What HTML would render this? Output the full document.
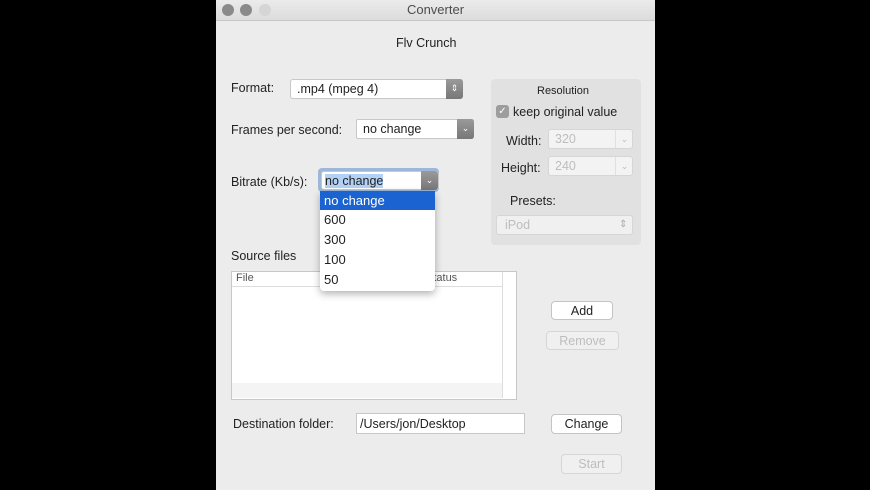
<!DOCTYPE html><html><head><style>
body{margin:0;width:870px;height:490px;background:#000;position:relative;overflow:hidden;font-family:"Liberation Sans",sans-serif;font-size:12.5px;color:#222}
.a{position:absolute}
#win{left:216px;top:0;width:439px;height:490px;background:#ececec}
#tb{left:0;top:0;width:439px;height:20px;background:linear-gradient(#ebebeb,#dcdcdc);border-bottom:1px solid #c8c8c8;text-align:center;line-height:20px;color:#4d4d4d;font-size:13px}
.dot{width:12px;height:12px;border-radius:50%;top:4px;background:#8a8a8a}
.box{background:#fff;border:1px solid #c8c8c8;border-radius:3px;box-sizing:border-box;padding-left:6px;line-height:18px}
.ar{background:linear-gradient(#9a9a9a,#777);border-radius:0 3px 3px 0;color:#fff;text-align:center;font-size:9px;line-height:18px}
.btn{background:#fff;border:1px solid #c4c4c4;border-radius:4px;box-sizing:border-box;text-align:center;line-height:18px}
.dis{color:#bdbdbd;background:#f0f0f0;border-color:#d6d6d6}
.sa{color:#bbb;font-size:9px;text-align:center;line-height:18px;border-left:1px solid #e0e0e0}
</style></head><body>
<div id="win" class="a">
<div id="tb" class="a">Converter</div>
<div class="a dot" style="left:6px"></div><div class="a dot" style="left:24px"></div><div class="a dot" style="left:43px;background:#d5d5d5"></div>
<div class="a" style="left:180px;top:36px;font-size:12.5px">Flv Crunch</div>
<div class="a" style="left:15px;top:81px">Format:</div>
<div class="a box" style="left:74px;top:79px;width:173px;height:20px">.mp4 (mpeg 4)</div>
<div class="a ar" style="left:230px;top:79px;width:17px;height:20px">⇕</div>
<div class="a" style="left:15px;top:123px">Frames per second:</div>
<div class="a box" style="left:140px;top:119px;width:118px;height:20px;border-radius:2px">no change</div>
<div class="a ar" style="left:241px;top:119px;width:17px;height:20px">⌄</div>
<div class="a" style="left:15px;top:175px">Bitrate (Kb/s):</div>
<div class="a" style="left:102px;top:168px;width:121px;height:24px;background:#9cb7d9;border-radius:4px"></div>
<div class="a box" style="left:105px;top:171px;width:118px;height:19px;padding-left:3px"><span style="background:#b3d0f5">no change</span></div>
<div class="a ar" style="left:205px;top:171px;width:17px;height:19px">⌄</div>
<div class="a" style="left:275px;top:79px;width:150px;height:166px;background:#e1e1e1;border-radius:4px"></div>
<div class="a" style="left:321px;top:85px;font-size:11px">Resolution</div>
<div class="a" style="left:280px;top:105px;width:13px;height:13px;background:#9d9d9d;border-radius:3px;color:#fff;font-size:10px;text-align:center;line-height:13px">✓</div>
<div class="a" style="left:297px;top:105px">keep original value</div>
<div class="a" style="left:290px;top:134px">Width:</div>
<div class="a box dis" style="left:332px;top:129px;width:85px;height:20px;background:#f3f3f3">320</div>
<div class="a sa" style="left:399px;top:130px;width:17px;height:18px">⌄</div>
<div class="a" style="left:285px;top:161px">Height:</div>
<div class="a box dis" style="left:332px;top:156px;width:85px;height:20px;background:#f3f3f3">240</div>
<div class="a sa" style="left:399px;top:157px;width:17px;height:18px">⌄</div>
<div class="a" style="left:294px;top:194px">Presets:</div>
<div class="a box dis" style="left:280px;top:215px;width:137px;height:20px;padding-left:8px">iPod</div>
<div class="a" style="left:403px;top:216px;color:#aaa;font-size:10px;line-height:18px">⇕</div>
<div class="a" style="left:15px;top:249px">Source files</div>
<div class="a" style="left:15px;top:271px;width:284px;height:127px;background:#fff;border:1px solid #c8c8c8"></div>
<div class="a" style="left:16px;top:286px;width:270px;height:1px;background:#ddd"></div>
<div class="a" style="left:286px;top:272px;width:1px;height:126px;background:#ddd"></div>
<div class="a" style="left:16px;top:383px;width:270px;height:15px;background:#f4f4f4"></div>
<div class="a" style="left:20px;top:272px;font-size:11px;color:#555">File</div>
<div class="a" style="left:210px;top:272px;font-size:11px;color:#555">Status</div>
<div class="a btn" style="left:335px;top:301px;width:62px;height:19px">Add</div>
<div class="a btn dis" style="left:330px;top:331px;width:73px;height:19px">Remove</div>
<div class="a" style="left:17px;top:417px">Destination folder:</div>
<div class="a box" style="left:140px;top:413px;width:169px;height:21px;border-radius:0;padding-left:3px;line-height:20px">/Users/jon/Desktop</div>
<div class="a btn" style="left:335px;top:414px;width:71px;height:20px;line-height:19px">Change</div>
<div class="a btn dis" style="left:345px;top:454px;width:61px;height:20px;line-height:19px">Start</div>
<div class="a" style="left:104px;top:191px;width:115px;height:100px;background:#fff;box-shadow:0 3px 8px rgba(0,0,0,.3);border-radius:0 0 4px 4px;font-size:13px">
<div style="background:#1a63d0;color:#fff;height:19px;line-height:20px;padding-left:4px">no change</div>
<div style="height:20px;line-height:20px;padding-left:4px">600</div>
<div style="height:20px;line-height:20px;padding-left:4px">300</div>
<div style="height:20px;line-height:20px;padding-left:4px">100</div>
<div style="height:20px;line-height:20px;padding-left:4px">50</div>
</div>
</div>
</body></html>
